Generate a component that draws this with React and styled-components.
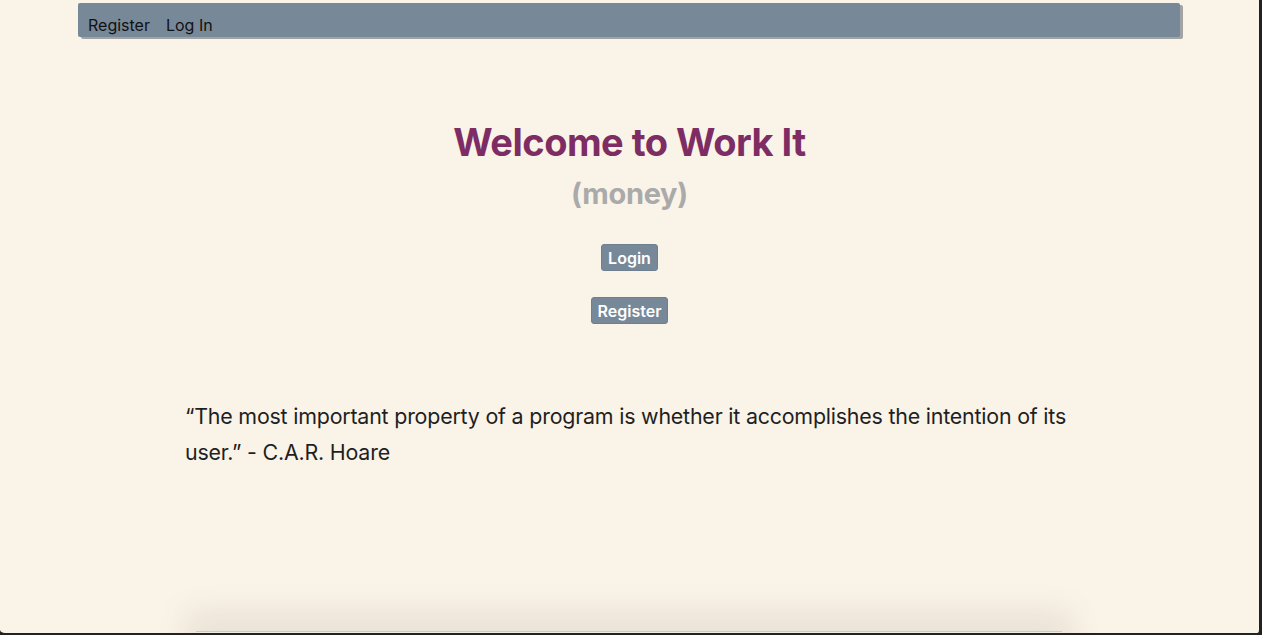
import styled, { createGlobalStyle } from "styled-components";

const GlobalStyle = createGlobalStyle`
  html, body {
    margin: 0;
    padding: 0;
    background: #222;
    overflow: hidden;
  }
  body {
    font-family: Inter, "Liberation Sans", sans-serif;
  }
`;

const Window = styled.div`
  position: relative;
  width: 1259px;
  height: 633px;
  background: #faf3e8;
  border-bottom-left-radius: 5px;
  border-bottom-right-radius: 5px;
  border-right: 3px solid #222;
  border-bottom: 2px solid #222;
  overflow: hidden;
`;

const NavBar = styled.nav`
  margin: 3px 0 0 78px;
  width: 1102px;
  height: 34px;
  background: #778899;
  display: flex;
  align-items: flex-end;
  gap: 16px;
  padding: 0 0 0 10px;
  box-sizing: border-box;
  border-radius: 2px;
  box-shadow: 3px 2px 0 #a3a3a3;
`;

const NavLink = styled.a`
  color: #111;
  font-size: 16px;
  line-height: 24px;
  text-decoration: none;
`;

const Hero = styled.section`
  display: flex;
  flex-direction: column;
  align-items: center;
  padding-top: 82px;
`;

const Title = styled.h1`
  margin: 0;
  color: #7e2d64;
  font-size: 38px;
  font-weight: 700;
  letter-spacing: -0.5px;
  line-height: 46px;
`;

const Subtitle = styled.h2`
  margin: 11px 0 0;
  color: #aaaaaa;
  font-size: 29px;
  font-weight: 700;
  letter-spacing: -0.3px;
  line-height: 36px;
`;

const Button = styled.button`
  margin-top: ${(p) => p.$top}px;
  background: #778899;
  color: #fff;
  border: 1px solid #6e7f90;
  border-radius: 3px;
  font-family: Inter, "Liberation Sans", sans-serif;
  font-size: 16px;
  font-weight: 600;
  line-height: 20px;
  padding: 3px 6px 2px;
  cursor: pointer;
`;

const Quote = styled.p`
  width: 890px;
  margin: 74px auto 0;
  padding-left: 1px;
  color: #1f1f1f;
  font-size: 21.4px;
  line-height: 36px;
  letter-spacing: -0.2px;
`;

const BottomCard = styled.div`
  position: absolute;
  left: 196px;
  width: 866px;
  bottom: -40px;
  height: 41px;
  background: #efece6;
  border-top: 1px solid #cfcac2;
  box-shadow: 0 -10px 30px 10px rgba(120, 110, 90, 0.12);
`;

function App() {
  return (
    <>
      <GlobalStyle />
      <Window>
        <NavBar>
          <NavLink href="#">Register</NavLink>
          <NavLink href="#">Log In</NavLink>
        </NavBar>
        <Hero>
          <Title>Welcome to Work It</Title>
          <Subtitle>(money)</Subtitle>
          <Button $top={32}>Login</Button>
          <Button $top={26}>Register</Button>
        </Hero>
        <Quote>
          “The most important property of a program is whether it accomplishes the intention of its
          user.” - C.A.R. Hoare
        </Quote>
        <BottomCard />
      </Window>
    </>
  );
}

export default App;
